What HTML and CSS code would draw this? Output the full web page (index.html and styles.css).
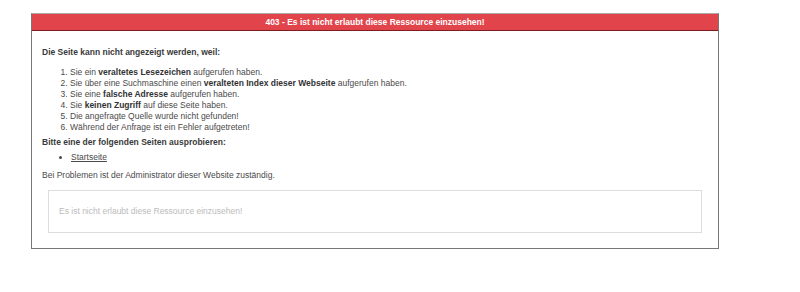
FILE: index.html
```html
<!DOCTYPE html>
<html lang="de">
<head>
    <meta charset="UTF-8">
    <title>403 - Es ist nicht erlaubt diese Ressource einzusehen!</title>
    <link rel="stylesheet" href="styles.css">
</head>
<body>
    <div id="error-box">
        <div class="error-title">403 - Es ist nicht erlaubt diese Ressource einzusehen!</div>
        <div class="error-content">
            <p class="lead">Die Seite kann nicht angezeigt werden, weil:</p>
            <ol class="reasons">
                <li>Sie ein <strong>veraltetes Lesezeichen</strong> aufgerufen haben.</li>
                <li>Sie über eine Suchmaschine einen <strong>veralteten Index dieser Webseite</strong> aufgerufen haben.</li>
                <li>Sie eine <strong>falsche Adresse</strong> aufgerufen haben.</li>
                <li>Sie <strong>keinen Zugriff</strong> auf diese Seite haben.</li>
                <li>Die angefragte Quelle wurde nicht gefunden!</li>
                <li>Während der Anfrage ist ein Fehler aufgetreten!</li>
            </ol>
            <p class="lead">Bitte eine der folgenden Seiten ausprobieren:</p>
            <ul class="links">
                <li><a href="#">Startseite</a></li>
            </ul>
            <p class="note">Bei Problemen ist der Administrator dieser Website zuständig.</p>
            <div class="error-message">Es ist nicht erlaubt diese Ressource einzusehen!</div>
        </div>
    </div>
</body>
</html>
```

FILE: styles.css
```css
body {
    margin: 0;
    padding: 0;
    background: #fff;
    font-family: "Liberation Sans", Arial, sans-serif;
    font-size: 8.5px;
    line-height: 11px;
    color: #4a4a4a;
}

/* Rahmen um die ganze Fehlermeldung */
#error-box {
    margin: 13px 0 0 31px;
    width: 688px;
    box-sizing: border-box;
    border: 1px solid #777;
    border-top-color: #aaa;
}

.error-title {
    height: 16px;
    line-height: 16px;
    background-color: #e2444c;
    border-bottom: 1px solid #7d1d22;
    color: #fff;
    font-weight: bold;
    text-align: center;
}

.error-content {
    padding: 16px 10px 15px 10px;
}

.lead {
    margin: 0;
    font-weight: bold;
    color: #3a3a3a;
}

.reasons {
    margin: 9px 0 4px 0;
    padding-left: 28px;
}

.reasons strong {
    color: #333;
}

.links {
    margin: 4px 0 7px 0;
    padding-left: 29px;
}

.links a {
    color: #4a4a4a;
}

.note {
    margin: 0 0 9px 0;
}

.error-message {
    margin: 0 6px;
    padding: 15px 10px;
    border: 1px solid #ddd;
    color: #bbb;
}
```
